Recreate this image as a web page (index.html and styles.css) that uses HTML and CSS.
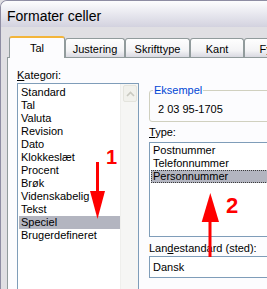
FILE: index.html
```html
<!DOCTYPE html>
<html lang="da">
<head>
	<meta charset="UTF-8">
	<meta name="viewport" content="width=device-width, initial-scale=1.0">
	<title>Formater celler</title>
	<link rel="stylesheet" href="styles.css">
</head>
<body>

	<div class="window">
		<div class="titlebar">Formater celler</div>

		<div class="dialog">
			<div class="tabs">
				<div class="tab tab--active tab--tal">Tal</div>
				<div class="tab tab--justering">Justering</div>
				<div class="tab tab--skrift">Skrifttype</div>
				<div class="tab tab--kant">Kant</div>
				<div class="tab tab--f">Fyld</div>
			</div>

			<div class="panel">
				<div class="col col--left">
					<div class="label"><u>K</u>ategori:</div>
					<div class="listbox listbox--category">
						<div class="listbox__items">
							<div class="item">Standard</div>
							<div class="item">Tal</div>
							<div class="item">Valuta</div>
							<div class="item">Revision</div>
							<div class="item">Dato</div>
							<div class="item">Klokkeslæt</div>
							<div class="item">Procent</div>
							<div class="item">Brøk</div>
							<div class="item">Videnskabelig</div>
							<div class="item">Tekst</div>
							<div class="item item--selected">Speciel</div>
							<div class="item">Brugerdefineret</div>
						</div>
						<div class="scrollbar">
							<div class="scrollbar__btn">
								<svg width="9" height="6" viewBox="0 0 9 6"><path d="M1 5 L4.5 1.5 L8 5" fill="none" stroke="#c9c9c0" stroke-width="1.6"/></svg>
							</div>
						</div>
					</div>
				</div>

				<div class="col col--right">
					<fieldset class="sample">
						<legend class="sample__legend">Eksempel</legend>
						<div class="sample__value">2 03 95-1705</div>
					</fieldset>

					<div class="label label--type"><u>T</u>ype:</div>
					<div class="listbox listbox--type">
						<div class="item">Postnummer</div>
						<div class="item">Telefonnummer</div>
						<div class="item item--selected item--focus">Personnummer</div>
					</div>

					<div class="label label--locale">Lan<u>d</u>estandard (sted):</div>
					<div class="combo">Dansk</div>
				</div>
			</div>
		</div>

		<svg class="arrows" width="267" height="289" viewBox="0 0 267 289">
			<rect x="96" y="162" width="3" height="31" fill="#ff0000"/>
			<polygon points="90,191 105,191 97.5,219" fill="#ff0000"/>
			<polygon points="210.3,193 219,222 201.7,222" fill="#ff0000"/>
			<rect x="208.5" y="220" width="3" height="37" fill="#ff0000"/>
		</svg>
		<span class="mark mark--one">1</span>
		<span class="mark mark--two">2</span>
	</div>

</body>
</html>
```

FILE: styles.css
```css
*, *::after, *::before {
	box-sizing: border-box;
}

html, body {
	margin: 0;
	overflow: hidden;
	background: #e0dfe3;
}

body {
	font-family: "Liberation Sans", Arial, sans-serif;
	font-size: 11px;
	color: #000;
}

.window {
	position: relative;
	width: 320px;
	height: 289px;
	border-left: 1px solid #8e8da3;
	border-top: 1px solid #8e8da3;
	border-top-left-radius: 7px;
	overflow: hidden;
}

.titlebar {
	height: 26px;
	padding: 7px 0 0 6px;
	font-size: 14px;
	line-height: 16px;
	background: linear-gradient(#fdfdfe 0%, #ececf2 40%, #d3d2df 100%);
}

.dialog {
	padding: 9px 0 0 6px;
	background: #e0dfe3;
	height: 262px;
}

/* tabs */

.tabs {
	display: flex;
	align-items: flex-end;
	height: 21px;
	padding-left: 2px;
}

.tab {
	height: 19px;
	padding-top: 3px;
	line-height: 14px;
	text-align: center;
	white-space: nowrap;
	border: 1px solid #919b9c;
	border-bottom: none;
	border-radius: 3px 3px 0 0;
	background: linear-gradient(#fefefe 0%, #f3f3f5 65%, #d9d9e1 100%);
}

.tab--active {
	position: relative;
	z-index: 1;
	height: 22px;
	margin-bottom: -1px;
	border-top: 2px solid #f3b53a;
	background: #fcfcfe;
}

.tab--tal { width: 56px; }
.tab--justering { width: 60px; }
.tab--skrift { width: 65px; }
.tab--kant { width: 54px; }
.tab--f { width: 52px; }

/* panel */

.panel {
	display: flex;
	gap: 10px;
	height: 240px;
	padding: 11px 0 0 9px;
	border: 1px solid #919b9c;
	background: #fcfcfe;
}

.label {
	line-height: 13px;
	white-space: nowrap;
}

.col--left {
	width: 122px;
}

.col--right {
	width: 150px;
	padding-top: 14px;
}

.listbox {
	background: #fff;
	border: 1px solid #7f9db9;
}

.listbox--category {
	display: flex;
	height: 230px;
	margin-top: 1px;
	padding-left: 1px;
}

.listbox__items {
	width: 101px;
	padding-top: 2px;
}

.item {
	height: 13px;
	line-height: 13px;
	padding-left: 2px;
	white-space: nowrap;
}

.item--selected {
	background: #b3b5c0;
}

.item--focus {
	outline: 1px dotted #3a3a3a;
	outline-offset: -1px;
}

.scrollbar {
	width: 18px;
	padding: 1px 1px 0 2px;
	background: #f6f6f4;
	border-left: 1px solid #efefec;
}

.scrollbar__btn {
	display: flex;
	justify-content: center;
	align-items: center;
	height: 17px;
	border: 1px solid #e4e4dd;
	border-radius: 2px;
	background: #f1f1ec;
}

/* sample group */

.sample {
	margin: 0;
	padding: 6px 3px 5px 3px;
	border: 1px solid #d0d0bf;
	border-radius: 3px;
}

.sample__legend {
	padding: 0 1px;
	line-height: 14px;
	color: #0046d5;
}

.sample__value {
	padding-left: 5px;
	line-height: 13px;
}

.label--type {
	margin-top: 4px;
}

.listbox--type {
	height: 95px;
	margin-top: 3px;
	padding: 1px 0 0 1px;
}

.label--locale {
	margin-top: 5px;
}

.combo {
	height: 22px;
	margin-top: 1px;
	padding-left: 3px;
	line-height: 20px;
	background: #fff;
	border: 1px solid #7f9db9;
}

/* annotations */

.arrows {
	position: absolute;
	top: -1px;
	left: -1px;
	pointer-events: none;
}

.mark {
	position: absolute;
	font-weight: bold;
	line-height: 1;
	color: #ff0000;
}

.mark--one {
	top: 146px;
	left: 105px;
	font-size: 20px;
}

.mark--two {
	top: 194px;
	left: 225px;
	font-size: 22px;
}
```
